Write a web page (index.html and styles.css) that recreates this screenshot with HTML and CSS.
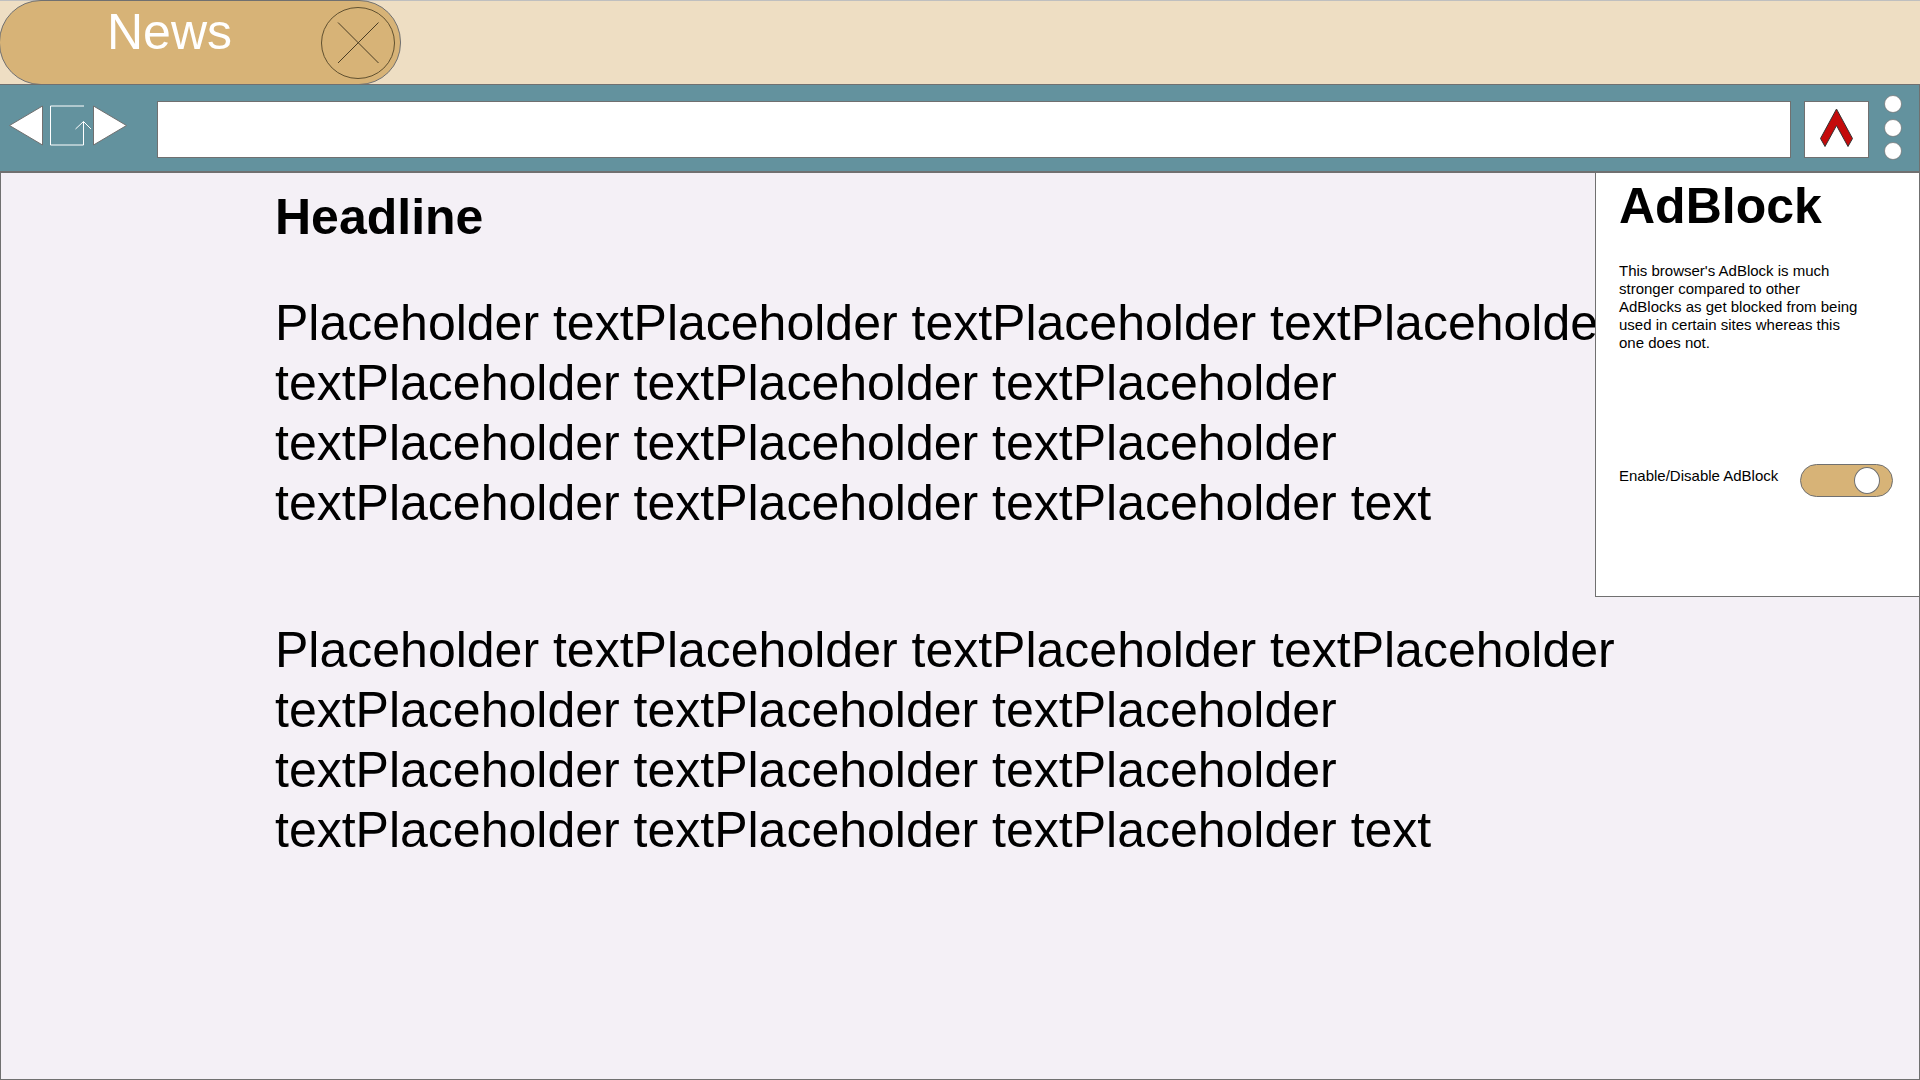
FILE: index.html
```html
<!DOCTYPE html>
<html lang="en">
<head>
<meta charset="utf-8">
<meta name="viewport" content="width=device-width, initial-scale=1">
<title>News</title>
<link rel="stylesheet" href="styles.css">
</head>
<body class="browser">
<header class="tab-strip">
  <div class="tab">
    <span class="tab-title">News</span>
    <button class="icon-button" type="button" aria-label="Close tab">
      <svg width="74" height="72" viewBox="0 0 74 72" fill="none" stroke="#60502f" stroke-width="1">
        <ellipse cx="37" cy="36" rx="36.5" ry="35.5"/>
        <path d="M17 15.500L57.500 56M57.500 15.500L17 56" stroke="#4a3d24"/>
      </svg>
    </button>
  </div>
</header>
<nav class="toolbar" aria-label="Browser">
  <div class="nav-buttons">
    <button class="icon-button" type="button" aria-label="Back">
      <svg width="34" height="42" viewBox="0 0 34 42"><path d="M.5 20.500L33.500 1V40Z" fill="#fff" stroke="#707070"/></svg>
    </button>
    <button class="icon-button" type="button" aria-label="Reload">
      <svg width="42" height="42" viewBox="0 0 42 42" fill="none" stroke="#fff"><path d="M34 1H.5V40H33.500V16.500M25.500 24L33.500 16.500L41 24"/></svg>
    </button>
    <button class="icon-button" type="button" aria-label="Forward">
      <svg width="34" height="42" viewBox="0 0 34 42"><path d="M33.500 20.500L.5 1V40Z" fill="#fff" stroke="#707070"/></svg>
    </button>
  </div>
  <input class="address" type="text" aria-label="Address">
  <button class="icon-button blocker" type="button" aria-label="AdBlock">
    <svg width="33" height="39" viewBox="0 0 33 39"><path d="M16.500 1L32.500 30.500L28 38.500L16.500 17.500L5 38.500L.5 30.500Z" fill="#c40b0b" stroke="#333"/></svg>
  </button>
  <button class="icon-button menu" type="button" aria-label="Menu">
    <svg width="18" height="66" viewBox="0 0 18 66" fill="#fff" stroke="#707070" stroke-opacity=".7"><circle cx="9" cy="9" r="8.500"/><circle cx="9" cy="33" r="8.500"/><circle cx="9" cy="56" r="8.500"/></svg>
  </button>
</nav>
<div class="viewport">
  <main class="article">
    <h1 class="heading">Headline</h1>
    <p>Placeholder textPlaceholder textPlaceholder textPlaceholder textPlaceholder textPlaceholder textPlaceholder textPlaceholder textPlaceholder textPlaceholder textPlaceholder textPlaceholder textPlaceholder text</p>
    <p>Placeholder textPlaceholder textPlaceholder textPlaceholder textPlaceholder textPlaceholder textPlaceholder textPlaceholder textPlaceholder textPlaceholder textPlaceholder textPlaceholder textPlaceholder text</p>
  </main>
  <aside class="panel">
    <h2 class="heading">AdBlock</h2>
    <p class="panel-text">This browser's AdBlock is much stronger compared to other AdBlocks as get blocked from being used in certain sites whereas this one does not.</p>
    <div class="setting">
      <label for="adblock">Enable/Disable AdBlock</label>
      <input class="switch" id="adblock" type="checkbox" role="switch" checked>
    </div>
  </aside>
</div>
</body>
</html>
```
FILE: styles.css
```css
*,
*::before {
  box-sizing: border-box;
}

.browser {
  display: flex;
  flex-direction: column;
  min-height: 100vh;
  margin: 0;
  background: #f4f0f6;
  color: #000;
  font-family: "Liberation Sans", Helvetica, Arial, sans-serif;
  font-size: 50px;
  line-height: 60px;
}

.icon-button {
  display: flex;
  flex: none;
  padding: 0;
  border: 0;
  background: none;
}

.tab-strip {
  height: 84px;
  border-top: 1px solid #bfbfbf;
  background: #eedec3;
}

.tab {
  display: flex;
  justify-content: space-between;
  width: 402px;
  height: 85px;
  margin: -1px 0 0 -1px;
  padding: 6px 5px 0 107px;
  border: 1px solid #707070;
  border-radius: 42px;
  background: #d7b377;
}

.tab-title {
  margin-top: -5px;
  color: #fff;
}

.toolbar {
  position: relative;
  display: flex;
  align-items: flex-start;
  height: 89px;
  padding: 16px 17px 0 9px;
  border: solid #707070;
  border-width: 1px 1px 2px 0;
  background: #63929e;
}

.nav-buttons {
  display: flex;
  gap: 7px;
  margin: 4px 30px 0 0;
}

.nav-buttons .icon-button:last-child {
  margin-left: -6px;
}

.address {
  flex: 1;
  min-width: 0;
  height: 57px;
  padding: 0 16px;
  border: 1px solid #707070;
  border-radius: 0;
  background: #fff;
  font: inherit;
  font-size: 24px;
}

.blocker {
  justify-content: center;
  width: 65px;
  height: 57px;
  margin: 0 15px 0 13px;
  padding-top: 6px;
  border: 1px solid #707070;
  background: #fff;
}

.menu {
  margin-top: -6px;
}

.viewport {
  position: relative;
  flex: 1;
  border: solid #707070;
  border-width: 0 1px 1px;
}

.article {
  max-width: 1640px;
  padding: 14px 0 40px 274px;
}

.heading {
  margin: 0;
  font-size: 50px;
  line-height: 60px;
}

.article p {
  margin: 46px 0 87px;
}

.panel {
  position: absolute;
  top: 0;
  right: 0;
  width: 324px;
  padding: 3px 26px 99px 23px;
  border: solid #707070;
  border-width: 0 0 1px 1px;
  background: #fff;
  font-size: 15px;
  line-height: 18px;
}

.panel-text {
  max-width: 246px;
  margin: 26px 0 112px;
}

.setting {
  display: flex;
  align-items: flex-start;
  justify-content: space-between;
}

.setting label {
  padding-top: 3px;
}

.switch {
  display: flex;
  justify-content: flex-end;
  width: 93px;
  height: 33px;
  margin: 0;
  padding: 2px 12px;
  border: 1px solid #707070;
  border-radius: 17px;
  background: #d7b377;
  appearance: none;
}

.switch::before {
  width: 26px;
  height: 27px;
  border: 1px solid #707070;
  border-radius: 50%;
  background: #fff;
  content: "";
}

.switch:not(:checked) {
  justify-content: flex-start;
}
```
